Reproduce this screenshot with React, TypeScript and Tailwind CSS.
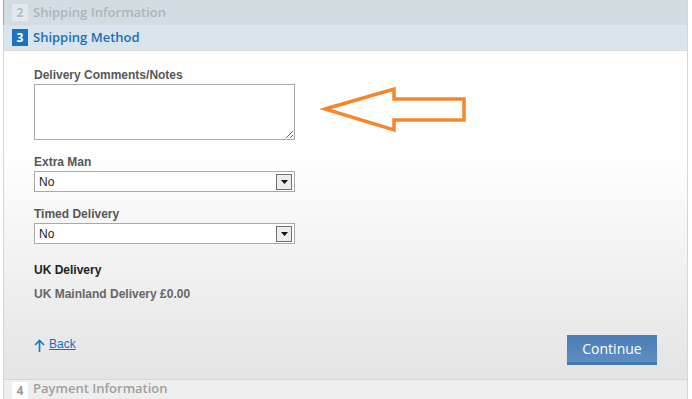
import React from 'react';

const head = { fontFamily: '"Open Sans", "Segoe UI", sans-serif' };
const body = { fontFamily: '"Liberation Sans", Arial, sans-serif' };

function StepRow({ n, title, active, muted }: { n: string; title: string; active?: boolean; muted?: boolean }) {
  return (
    <div
      className={
        'flex items-center ' +
        (active
          ? 'h-[26px] bg-[#d9e4ed] border-b border-[#dcdcdc]'
          : muted
          ? 'h-[25px] bg-[#d2dce1]'
          : 'h-[19px] bg-[#eeeeee] items-start pt-[2px]')
      }
      style={head}
    >
      <span
        className={
          'ml-[8px] w-[16px] h-[17px] flex items-center justify-center text-[12px] font-bold ' +
          (active ? 'bg-[#1b74c2] text-white' : muted ? 'bg-[#e2e9ec] text-[#b4bcc0]' : 'bg-white text-[#9a9a9a]')
        }
      >
        {n}
      </span>
      <span
        className={
          'ml-[5px] text-[13px] leading-none font-semibold ' +
          (active ? 'text-[#1b6fb8]' : muted ? 'text-[#acb5ba]' : 'text-[#a0a0a0]')
        }
      >
        {title}
      </span>
    </div>
  );
}

function Select() {
  return (
    <div className="mt-px w-[261px] h-[21px] border border-[#a9a9a9] bg-white flex items-center justify-between pl-[4px] pr-[2px]">
      <span className="text-[12px] text-[#222]">No</span>
      <span className="w-[16px] h-[16px] border border-[#707070] bg-[#ececec] flex items-center justify-center">
        <svg width="7" height="4" viewBox="0 0 7 4">
          <path d="M0 0h7L3.5 4z" fill="#111" />
        </svg>
      </span>
    </div>
  );
}

export default function App() {
  return (
    <div className="w-[692px] h-[399px] bg-white overflow-hidden" style={body}>
      <div className="ml-[3px] w-[685px] border-l border-r border-[#d6d6d6]">
        <div className="border-l border-[#9aa5ab] -ml-px">
          <StepRow n="2" title="Shipping Information" muted />
        </div>
        <StepRow n="3" title="Shipping Method" active />
        <div className="relative h-[329px] bg-gradient-to-b from-white from-30% to-[#e4e4e4] border-b border-[#d6d6d6] pl-[30px] pr-[30px] pt-[17px]">
          <div className="text-[12px] leading-[15px] font-bold text-[#575757]">Delivery Comments/Notes</div>
          <textarea className="mt-px block w-[261px] h-[56px] border border-[#a9a9a9] bg-white resize" />

          <div className="mt-[15px] text-[12px] leading-[15px] font-bold text-[#575757]">Extra Man</div>
          <Select />

          <div className="mt-[15px] text-[12px] leading-[15px] font-bold text-[#575757]">Timed Delivery</div>
          <Select />

          <div className="mt-[19px] text-[12px] leading-[15px] font-bold text-[#222]">UK Delivery</div>
          <div className="mt-[9px] text-[12px] leading-[15px] font-bold text-[#666]">UK Mainland Delivery £0.00</div>

          <div className="mt-[33px] flex items-start justify-between">
            <a href="#" className="mt-[2px] flex items-center gap-[4px] text-[12px] leading-[15px] text-[#1b6fb8]">
              <svg width="11" height="13" viewBox="0 0 11 13" className="mt-px">
                <path d="M5.5 1.5V13M1 6l4.5-4.5L10 6" fill="none" stroke="#1b74c2" strokeWidth="1.6" />
              </svg>
              <span className="underline">Back</span>
            </a>
            <button
              className="w-[90px] h-[30px] text-white text-[14px] bg-gradient-to-b from-[#4a7db4] to-[#5c8ec4] border-b-[3px] border-[#4478ad]"
              style={head}
            >
              Continue
            </button>
          </div>

          <svg className="absolute left-[316px] top-[34px]" width="150" height="50" viewBox="316 86 150 50">
            <path
              d="M321 110 L390 90 L390 100 L460 100 L460 121 L390 121 L390 131 Z"
              fill="none"
              stroke="#f7852b"
              strokeWidth="3.5"
              strokeLinejoin="miter"
            />
          </svg>
        </div>
        <StepRow n="4" title="Payment Information" />
      </div>
    </div>
  );
}
